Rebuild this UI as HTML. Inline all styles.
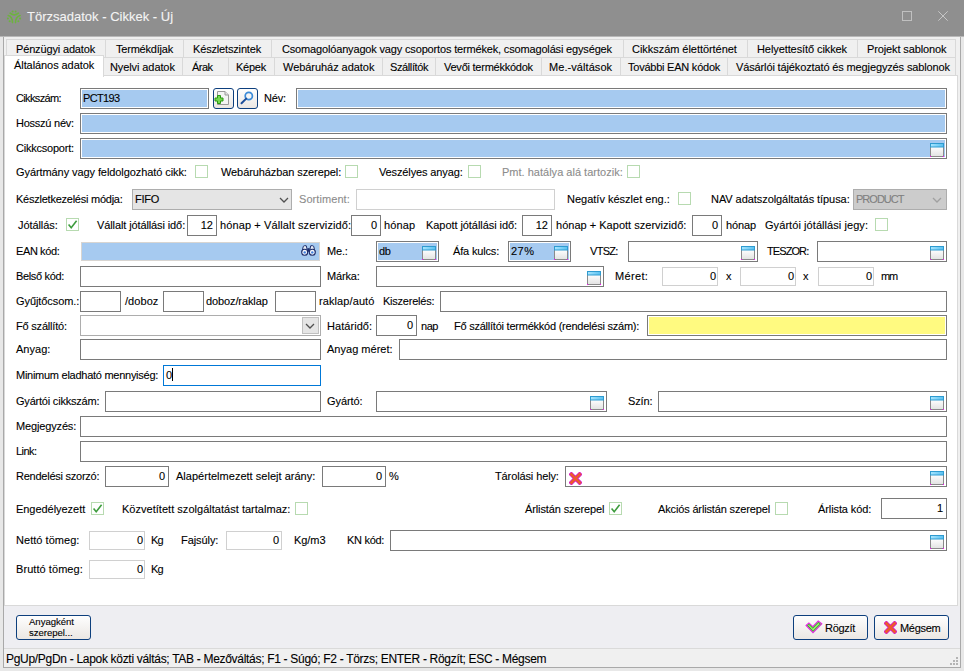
<!DOCTYPE html><html><head><meta charset="utf-8"><style>
html,body{margin:0;padding:0;width:964px;height:671px;overflow:hidden;background:#e8e8e8;position:relative}
body{font-family:"Liberation Sans",sans-serif}
.l{position:absolute;font-size:11px;line-height:13px;white-space:nowrap;color:#000;-webkit-text-stroke:0.1px currentColor}
.b{position:absolute}
.ic{position:absolute}
.cb{position:absolute;width:11px;height:11px;border:1px solid #b7dab0;background:#fff}
.tab{position:absolute;background:#f0f0f0;border:1px solid #d9d9d9;box-sizing:border-box}
.btn{position:absolute;box-sizing:border-box;border:1px solid #0d3f7d;border-radius:3px;background:linear-gradient(#fefefe,#ebe7e3)}
</style></head><body>
<div class="b" style="left:0px;top:0px;width:964px;height:36px;background:#8f8f8f"></div>
<div class="b" style="left:0px;top:36px;width:964px;height:1px;background:#b8b8b8"></div>
<div class="b" style="left:3px;top:37px;width:958px;height:631px;background:#f0f0f0"></div>
<div class="b" style="left:3px;top:37px;width:1px;height:631px;background:#a9a9a9"></div>
<div class="b" style="left:960px;top:37px;width:1px;height:631px;background:#a9a9a9"></div>
<div class="b" style="left:3px;top:667px;width:958px;height:1px;background:#a9a9a9"></div>
<svg class="ic" style="left:4px;top:6px" width="22" height="22" viewBox="0 0 22 22"><g fill="none" stroke="#6db33f" stroke-width="1.6" stroke-linecap="round"><path d="M6.1 7.2 Q10.2 10.6 14.4 7.2"/><path d="M4.3 9.5 Q8.5 10.8 8.5 16.6"/><path d="M16.1 9.5 Q11.5 10.8 11.5 16.6"/></g><g fill="#6db33f"><circle cx="8.6" cy="5.4" r="1"/><circle cx="11.6" cy="5.4" r="1"/><circle cx="3.9" cy="12.6" r="1"/><circle cx="5.6" cy="15.2" r="1"/><circle cx="16.1" cy="12.6" r="1"/><circle cx="14.4" cy="15.2" r="1"/></g></svg>
<div class="l" style="left:27px;top:9px;color:#f4f4f4;font-size:13px;line-height:16px;letter-spacing:0.007px;">Törzsadatok - Cikkek - Új</div>
<div class="b" style="left:902px;top:11px;width:10px;height:10px;border:1px solid #c0c0c0;box-sizing:border-box"></div>
<svg class="ic" style="left:938px;top:11px" width="10" height="10" viewBox="0 0 10 10"><path d="M0.3 0.3 L9.7 9.7 M9.7 0.3 L0.3 9.7" stroke="#c6c6c6" stroke-width="1"/></svg>
<div class="b" style="left:4px;top:75px;width:954px;height:531px;background:#fff;border:1px solid #d9d9d9;box-sizing:border-box"></div>
<div class="tab" style="left:6px;top:39px;width:100px;height:19px"></div>
<div class="tab" style="left:105px;top:39px;width:79px;height:19px"></div>
<div class="tab" style="left:183px;top:39px;width:89px;height:19px"></div>
<div class="tab" style="left:271px;top:39px;width:353px;height:19px"></div>
<div class="tab" style="left:623px;top:39px;width:125px;height:19px"></div>
<div class="tab" style="left:747px;top:39px;width:111px;height:19px"></div>
<div class="tab" style="left:857px;top:39px;width:99px;height:19px"></div>
<div class="l" style="left:16px;top:43px;letter-spacing:-0.153px;">Pénzügyi adatok</div>
<div class="l" style="left:116px;top:43px;letter-spacing:-0.210px;">Termékdíjak</div>
<div class="l" style="left:193px;top:43px;letter-spacing:-0.162px;">Készletszintek</div>
<div class="l" style="left:282px;top:43px;letter-spacing:-0.162px;">Csomagolóanyagok vagy csoportos termékek, csomagolási egységek</div>
<div class="l" style="left:632px;top:43px;letter-spacing:-0.043px;">Cikkszám élettörténet</div>
<div class="l" style="left:757px;top:43px;letter-spacing:-0.089px;">Helyettesítő cikkek</div>
<div class="l" style="left:867px;top:43px;letter-spacing:-0.115px;">Projekt sablonok</div>
<div class="tab" style="left:103px;top:57px;width:80px;height:19px"></div>
<div class="tab" style="left:182px;top:57px;width:47px;height:19px"></div>
<div class="tab" style="left:228px;top:57px;width:47px;height:19px"></div>
<div class="tab" style="left:274px;top:57px;width:109px;height:19px"></div>
<div class="tab" style="left:382px;top:57px;width:54px;height:19px"></div>
<div class="tab" style="left:435px;top:57px;width:107px;height:19px"></div>
<div class="tab" style="left:541px;top:57px;width:80px;height:19px"></div>
<div class="tab" style="left:620px;top:57px;width:108px;height:19px"></div>
<div class="tab" style="left:727px;top:57px;width:229px;height:19px"></div>
<div class="l" style="left:110px;top:61px;letter-spacing:-0.096px;">Nyelvi adatok</div>
<div class="l" style="left:192px;top:61px;letter-spacing:-0.542px;">Árak</div>
<div class="l" style="left:236px;top:61px;letter-spacing:-0.251px;">Képek</div>
<div class="l" style="left:283px;top:61px;letter-spacing:-0.049px;">Webáruház adatok</div>
<div class="l" style="left:390px;top:61px;letter-spacing:-0.385px;">Szállítók</div>
<div class="l" style="left:444px;top:61px;letter-spacing:-0.240px;">Vevői termékkódok</div>
<div class="l" style="left:549px;top:61px;letter-spacing:0.067px;">Me.-váltások</div>
<div class="l" style="left:628px;top:61px;letter-spacing:-0.231px;">További EAN kódok</div>
<div class="l" style="left:736px;top:61px;letter-spacing:-0.131px;">Vásárlói tájékoztató és megjegyzés sablonok</div>
<div class="b" style="left:4px;top:55px;width:100px;height:22px;background:#fff;border:1px solid #d9d9d9;border-bottom:none;box-sizing:border-box"></div>
<div class="l" style="left:14px;top:59px;letter-spacing:-0.076px;">Általános adatok</div>
<div class="l" style="left:16px;top:92px;letter-spacing:-0.642px;">Cikkszám:</div>
<div class="b" style="left:80px;top:88px;width:127px;height:19px;border:1px solid #7a7a7a;box-shadow:inset 0 0 0 1px #fff;background:#a6caf0;"></div>
<div class="l" style="left:83px;top:92px;letter-spacing:-0.652px;">PCT193</div>
<div class="btn" style="left:213px;top:88px;width:21px;height:21px"></div>
<svg class="ic" style="left:214px;top:89px" width="19" height="19" viewBox="0 0 19 19"><path d="M3.5 2.5 H11 L14.5 6 V15.5 H3.5 Z" fill="#f4f4f4" stroke="#9a9a9a"/><path d="M11 2.5 V6 H14.5" fill="#e4e4e4" stroke="#9a9a9a"/><path d="M3.5 6.5 H6.5 V9 H9 V12 H6.5 V14.5 H3.5 V12 H1 V9 H3.5 Z" fill="#74d850" stroke="#2a9812"/></svg>
<div class="btn" style="left:237px;top:88px;width:21px;height:21px"></div>
<svg class="ic" style="left:238px;top:89px" width="19" height="19" viewBox="0 0 19 19"><circle cx="10.8" cy="7" r="3.6" fill="#f4f4f4" stroke="#3a8ad8" stroke-width="1.7"/><path d="M8.2 9.6 L3.5 14.3" stroke="#1e4f9a" stroke-width="2" stroke-linecap="round"/></svg>
<div class="l" style="left:264px;top:92px;letter-spacing:-0.175px;">Név:</div>
<div class="b" style="left:296px;top:88px;width:649px;height:19px;border:1px solid #7a7a7a;box-shadow:inset 0 0 0 1px #fff;background:#a6caf0;"></div>
<div class="l" style="left:16px;top:117px;letter-spacing:-0.243px;">Hosszú név:</div>
<div class="b" style="left:80px;top:113px;width:865px;height:19px;border:1px solid #7a7a7a;box-shadow:inset 0 0 0 1px #fff;background:#a6caf0;"></div>
<div class="l" style="left:16px;top:142px;letter-spacing:-0.221px;">Cikkcsoport:</div>
<div class="b" style="left:80px;top:138px;width:865px;height:19px;border:1px solid #7a7a7a;box-shadow:inset 0 0 0 1px #fff;background:#a6caf0;"></div>
<svg class="ic" style="left:930px;top:143px" width="14" height="14" viewBox="0 0 14 14"><defs><linearGradient id="cg" x1="0" y1="0" x2="0" y2="1"><stop offset="0" stop-color="#ffffff"/><stop offset="1" stop-color="#e2e2e2"/></linearGradient><linearGradient id="ct" x1="0" y1="0" x2="1" y2="0"><stop offset="0" stop-color="#a8e6ff"/><stop offset="1" stop-color="#58c0f0"/></linearGradient></defs><rect x="0.5" y="3.5" width="13" height="10" fill="url(#cg)" stroke="#8a8a8a"/><rect x="0.5" y="0.5" width="13" height="3.5" fill="url(#ct)" stroke="#2f9bd0"/><rect x="0" y="13" width="1" height="1" fill="#ff00ff"/><rect x="13" y="13" width="1" height="1" fill="#ff00ff"/></svg>
<div class="l" style="left:16px;top:166px;letter-spacing:-0.083px;">Gyártmány vagy feldolgozható cikk:</div>
<div class="cb" style="left:195px;top:165px"></div>
<div class="l" style="left:221px;top:166px;letter-spacing:-0.091px;">Webáruházban szerepel:</div>
<div class="cb" style="left:345px;top:165px"></div>
<div class="l" style="left:379px;top:166px;letter-spacing:-0.128px;">Veszélyes anyag:</div>
<div class="cb" style="left:468px;top:165px"></div>
<div class="l" style="left:502px;top:166px;color:#8c8c8c;letter-spacing:0.010px;">Pmt. hatálya alá tartozik:</div>
<div class="cb" style="left:627px;top:165px"></div>
<div class="l" style="left:16px;top:193px;letter-spacing:-0.242px;">Készletkezelési módja:</div>
<div class="b" style="left:132px;top:189px;width:158px;height:19px;border:1px solid #adadad;background:#e5e5e5;"></div>
<div class="l" style="left:135px;top:193px;letter-spacing:-0.254px;">FIFO</div>
<svg class="ic" style="left:279px;top:197px" width="10" height="7" viewBox="0 0 10 7"><path d="M1 1 L5.0 5.0 L9 1" fill="none" stroke="#505050" stroke-width="1.25"/></svg>
<div class="l" style="left:299px;top:193px;color:#8c8c8c;letter-spacing:0.073px;">Sortiment:</div>
<div class="b" style="left:356px;top:189px;width:197px;height:19px;border:1px solid #d0d0d0;background:#fff;"></div>
<div class="l" style="left:567px;top:193px;letter-spacing:0.003px;">Negatív készlet eng.:</div>
<div class="cb" style="left:678px;top:192px"></div>
<div class="l" style="left:711px;top:193px;letter-spacing:-0.064px;">NAV adatszolgáltatás típusa:</div>
<div class="b" style="left:853px;top:189px;width:92px;height:19px;border:1px solid #adadad;background:#cccccc;"></div>
<div class="l" style="left:856px;top:193px;color:#808080;letter-spacing:-0.982px;">PRODUCT</div>
<svg class="ic" style="left:932px;top:197px" width="10" height="7" viewBox="0 0 10 7"><path d="M1 1 L5.0 5.0 L9 1" fill="none" stroke="#a0a0a0" stroke-width="1.25"/></svg>
<div class="l" style="left:18px;top:219px;letter-spacing:-0.082px;">Jótállás:</div>
<div class="cb" style="left:66px;top:218px"></div>
<svg class="ic" style="left:66px;top:218px" width="13" height="13" viewBox="0 0 13 13"><path d="M2.6 6.6 L5.2 9.8 L10.6 2.8" fill="none" stroke="#3d9c3d" stroke-width="1.6"/></svg>
<div class="l" style="left:97px;top:219px;letter-spacing:-0.110px;">Vállalt jótállási idő:</div>
<div class="b" style="left:187px;top:215px;width:28px;height:19px;border:1px solid #7a7a7a;box-shadow:inset 0 0 0 1px #fff;background:#fff;"></div>
<div class="l" style="left:187px;width:26px;text-align:right;top:219px;color:#000;letter-spacing:0">12</div>
<div class="l" style="left:220px;top:219px;letter-spacing:0.115px;">hónap + Vállalt szervizidő:</div>
<div class="b" style="left:351px;top:215px;width:28px;height:19px;border:1px solid #7a7a7a;box-shadow:inset 0 0 0 1px #fff;background:#fff;"></div>
<div class="l" style="left:351px;width:26px;text-align:right;top:219px;color:#000;letter-spacing:0">0</div>
<div class="l" style="left:384px;top:219px;letter-spacing:0.152px;">hónap</div>
<div class="l" style="left:426px;top:219px;letter-spacing:-0.062px;">Kapott jótállási idő:</div>
<div class="b" style="left:522px;top:215px;width:28px;height:19px;border:1px solid #7a7a7a;box-shadow:inset 0 0 0 1px #fff;background:#fff;"></div>
<div class="l" style="left:522px;width:26px;text-align:right;top:219px;color:#000;letter-spacing:0">12</div>
<div class="l" style="left:556px;top:219px;letter-spacing:0.018px;">hónap + Kapott szervizidő:</div>
<div class="b" style="left:692px;top:215px;width:28px;height:19px;border:1px solid #7a7a7a;box-shadow:inset 0 0 0 1px #fff;background:#fff;"></div>
<div class="l" style="left:692px;width:26px;text-align:right;top:219px;color:#000;letter-spacing:0">0</div>
<div class="l" style="left:726px;top:219px;letter-spacing:-0.123px;">hónap</div>
<div class="l" style="left:765px;top:219px;letter-spacing:0.068px;">Gyártói jótállási jegy:</div>
<div class="cb" style="left:875px;top:218px"></div>
<div class="l" style="left:16px;top:245px;letter-spacing:-0.396px;">EAN kód:</div>
<div class="b" style="left:81px;top:242px;width:237px;height:17px;border:1px solid #d8d5d1;background:#a6caf0;"></div>
<svg class="ic" style="left:301px;top:245px" width="15" height="11" viewBox="0 0 15 11"><path d="M0.9 7.2 L2.3 1.3 Q3.6 0.2 5.3 0.8 L6.6 6.8 Z" fill="#e9eef7" stroke="#1c2d6b" stroke-width="1"/><path d="M14.1 7.2 L12.7 1.3 Q11.4 0.2 9.7 0.8 L8.4 6.8 Z" fill="#e9eef7" stroke="#1c2d6b" stroke-width="1"/><circle cx="3.7" cy="7.3" r="3" fill="#f4f6fb" stroke="#1c2d6b" stroke-width="1.1"/><circle cx="11.3" cy="7.3" r="3" fill="#f4f6fb" stroke="#1c2d6b" stroke-width="1.1"/><rect x="6.4" y="3.2" width="2.2" height="3.6" fill="#1c2d6b"/><circle cx="3.7" cy="7.4" r="1.2" fill="#3d7fe0"/><circle cx="11.3" cy="7.4" r="1.2" fill="#3d7fe0"/></svg>
<div class="l" style="left:327px;top:245px;letter-spacing:-0.202px;">Me.:</div>
<div class="b" style="left:376px;top:241px;width:61px;height:19px;border:1px solid #7a7a7a;box-shadow:inset 0 0 0 1px #fff;background:#a6caf0;"></div>
<div class="l" style="left:379px;top:245px;letter-spacing:-0.250px;">db</div>
<svg class="ic" style="left:422px;top:246px" width="14" height="14" viewBox="0 0 14 14"><defs><linearGradient id="cg" x1="0" y1="0" x2="0" y2="1"><stop offset="0" stop-color="#ffffff"/><stop offset="1" stop-color="#e2e2e2"/></linearGradient><linearGradient id="ct" x1="0" y1="0" x2="1" y2="0"><stop offset="0" stop-color="#a8e6ff"/><stop offset="1" stop-color="#58c0f0"/></linearGradient></defs><rect x="0.5" y="3.5" width="13" height="10" fill="url(#cg)" stroke="#8a8a8a"/><rect x="0.5" y="0.5" width="13" height="3.5" fill="url(#ct)" stroke="#2f9bd0"/><rect x="0" y="13" width="1" height="1" fill="#ff00ff"/><rect x="13" y="13" width="1" height="1" fill="#ff00ff"/></svg>
<div class="l" style="left:453px;top:245px;letter-spacing:-0.165px;">Áfa kulcs:</div>
<div class="b" style="left:508px;top:241px;width:61px;height:19px;border:1px solid #7a7a7a;box-shadow:inset 0 0 0 1px #fff;background:#a6caf0;"></div>
<div class="l" style="left:511px;top:245px;letter-spacing:0.484px;">27%</div>
<svg class="ic" style="left:554px;top:246px" width="14" height="14" viewBox="0 0 14 14"><defs><linearGradient id="cg" x1="0" y1="0" x2="0" y2="1"><stop offset="0" stop-color="#ffffff"/><stop offset="1" stop-color="#e2e2e2"/></linearGradient><linearGradient id="ct" x1="0" y1="0" x2="1" y2="0"><stop offset="0" stop-color="#a8e6ff"/><stop offset="1" stop-color="#58c0f0"/></linearGradient></defs><rect x="0.5" y="3.5" width="13" height="10" fill="url(#cg)" stroke="#8a8a8a"/><rect x="0.5" y="0.5" width="13" height="3.5" fill="url(#ct)" stroke="#2f9bd0"/><rect x="0" y="13" width="1" height="1" fill="#ff00ff"/><rect x="13" y="13" width="1" height="1" fill="#ff00ff"/></svg>
<div class="l" style="left:590px;top:245px;letter-spacing:-0.693px;">VTSZ:</div>
<div class="b" style="left:628px;top:241px;width:128px;height:19px;border:1px solid #7a7a7a;box-shadow:inset 0 0 0 1px #fff;background:#fff;"></div>
<svg class="ic" style="left:741px;top:246px" width="14" height="14" viewBox="0 0 14 14"><defs><linearGradient id="cg" x1="0" y1="0" x2="0" y2="1"><stop offset="0" stop-color="#ffffff"/><stop offset="1" stop-color="#e2e2e2"/></linearGradient><linearGradient id="ct" x1="0" y1="0" x2="1" y2="0"><stop offset="0" stop-color="#a8e6ff"/><stop offset="1" stop-color="#58c0f0"/></linearGradient></defs><rect x="0.5" y="3.5" width="13" height="10" fill="url(#cg)" stroke="#8a8a8a"/><rect x="0.5" y="0.5" width="13" height="3.5" fill="url(#ct)" stroke="#2f9bd0"/><rect x="0" y="13" width="1" height="1" fill="#ff00ff"/><rect x="13" y="13" width="1" height="1" fill="#ff00ff"/></svg>
<div class="l" style="left:767px;top:245px;letter-spacing:-0.912px;">TESZOR:</div>
<div class="b" style="left:817px;top:241px;width:128px;height:19px;border:1px solid #7a7a7a;box-shadow:inset 0 0 0 1px #fff;background:#fff;"></div>
<svg class="ic" style="left:930px;top:246px" width="14" height="14" viewBox="0 0 14 14"><defs><linearGradient id="cg" x1="0" y1="0" x2="0" y2="1"><stop offset="0" stop-color="#ffffff"/><stop offset="1" stop-color="#e2e2e2"/></linearGradient><linearGradient id="ct" x1="0" y1="0" x2="1" y2="0"><stop offset="0" stop-color="#a8e6ff"/><stop offset="1" stop-color="#58c0f0"/></linearGradient></defs><rect x="0.5" y="3.5" width="13" height="10" fill="url(#cg)" stroke="#8a8a8a"/><rect x="0.5" y="0.5" width="13" height="3.5" fill="url(#ct)" stroke="#2f9bd0"/><rect x="0" y="13" width="1" height="1" fill="#ff00ff"/><rect x="13" y="13" width="1" height="1" fill="#ff00ff"/></svg>
<div class="l" style="left:16px;top:270px;letter-spacing:-0.342px;">Belső kód:</div>
<div class="b" style="left:80px;top:266px;width:239px;height:19px;border:1px solid #7a7a7a;box-shadow:inset 0 0 0 1px #fff;background:#fff;"></div>
<div class="l" style="left:327px;top:270px;letter-spacing:-0.165px;">Márka:</div>
<div class="b" style="left:376px;top:266px;width:226px;height:19px;border:1px solid #7a7a7a;box-shadow:inset 0 0 0 1px #fff;background:#fff;"></div>
<svg class="ic" style="left:587px;top:271px" width="14" height="14" viewBox="0 0 14 14"><defs><linearGradient id="cg" x1="0" y1="0" x2="0" y2="1"><stop offset="0" stop-color="#ffffff"/><stop offset="1" stop-color="#e2e2e2"/></linearGradient><linearGradient id="ct" x1="0" y1="0" x2="1" y2="0"><stop offset="0" stop-color="#a8e6ff"/><stop offset="1" stop-color="#58c0f0"/></linearGradient></defs><rect x="0.5" y="3.5" width="13" height="10" fill="url(#cg)" stroke="#8a8a8a"/><rect x="0.5" y="0.5" width="13" height="3.5" fill="url(#ct)" stroke="#2f9bd0"/><rect x="0" y="13" width="1" height="1" fill="#ff00ff"/><rect x="13" y="13" width="1" height="1" fill="#ff00ff"/></svg>
<div class="l" style="left:615px;top:270px;letter-spacing:0.342px;">Méret:</div>
<div class="b" style="left:662px;top:267px;width:54px;height:17px;border:1px solid #d0d0d0;background:#fff;"></div>
<div class="l" style="left:662px;width:54px;text-align:right;top:270px;color:#000;letter-spacing:0">0</div>
<div class="l" style="left:726px;top:270px;letter-spacing:0.400px;">x</div>
<div class="b" style="left:740px;top:267px;width:54px;height:17px;border:1px solid #d0d0d0;background:#fff;"></div>
<div class="l" style="left:740px;width:54px;text-align:right;top:270px;color:#000;letter-spacing:0">0</div>
<div class="l" style="left:803px;top:270px;letter-spacing:1.000px;">x</div>
<div class="b" style="left:818px;top:267px;width:54px;height:17px;border:1px solid #d0d0d0;background:#fff;"></div>
<div class="l" style="left:818px;width:54px;text-align:right;top:270px;color:#000;letter-spacing:0">0</div>
<div class="l" style="left:881px;top:270px;letter-spacing:-1.200px;">mm</div>
<div class="l" style="left:16px;top:295px;letter-spacing:-0.081px;">Gyűjtőcsom.:</div>
<div class="b" style="left:80px;top:291px;width:39px;height:19px;border:1px solid #7a7a7a;box-shadow:inset 0 0 0 1px #fff;background:#fff;"></div>
<div class="l" style="left:125px;top:295px;letter-spacing:0.054px;">/doboz</div>
<div class="b" style="left:163px;top:291px;width:39px;height:19px;border:1px solid #7a7a7a;box-shadow:inset 0 0 0 1px #fff;background:#fff;"></div>
<div class="l" style="left:206px;top:295px;letter-spacing:-0.109px;">doboz/raklap</div>
<div class="b" style="left:275px;top:291px;width:39px;height:19px;border:1px solid #7a7a7a;box-shadow:inset 0 0 0 1px #fff;background:#fff;"></div>
<div class="l" style="left:319px;top:295px;letter-spacing:0.096px;">raklap/autó</div>
<div class="l" style="left:383px;top:295px;letter-spacing:-0.230px;">Kiszerelés:</div>
<div class="b" style="left:440px;top:291px;width:505px;height:19px;border:1px solid #7a7a7a;box-shadow:inset 0 0 0 1px #fff;background:#fff;"></div>
<div class="l" style="left:16px;top:320px;letter-spacing:-0.199px;">Fő szállító:</div>
<div class="b" style="left:80px;top:315px;width:239px;height:19px;border:1px solid #adadad;background:#fff;"></div>
<div class="b" style="left:302px;top:317px;width:15px;height:15px;background:#e5e5e5;border:1px solid #c0c0c0"></div>
<svg class="ic" style="left:305px;top:323px" width="10" height="7" viewBox="0 0 10 7"><path d="M1 1 L5.0 5.0 L9 1" fill="none" stroke="#505050" stroke-width="1.25"/></svg>
<div class="l" style="left:327px;top:320px;letter-spacing:0.057px;">Határidő:</div>
<div class="b" style="left:376px;top:315px;width:39px;height:19px;border:1px solid #7a7a7a;box-shadow:inset 0 0 0 1px #fff;background:#fff;"></div>
<div class="l" style="left:376px;width:37px;text-align:right;top:319px;color:#000;letter-spacing:0">0</div>
<div class="l" style="left:421px;top:320px;letter-spacing:-0.480px;">nap</div>
<div class="l" style="left:454px;top:320px;letter-spacing:-0.233px;">Fő szállítói termékkód (rendelési szám):</div>
<div class="b" style="left:647px;top:315px;width:298px;height:19px;border:1px solid #7a7a7a;box-shadow:inset 0 0 0 1px #fff;background:#fffa80;"></div>
<div class="l" style="left:16px;top:343px;letter-spacing:0.030px;">Anyag:</div>
<div class="b" style="left:80px;top:339px;width:239px;height:19px;border:1px solid #7a7a7a;box-shadow:inset 0 0 0 1px #fff;background:#fff;"></div>
<div class="l" style="left:327px;top:343px;letter-spacing:0.016px;">Anyag méret:</div>
<div class="b" style="left:399px;top:339px;width:546px;height:19px;border:1px solid #7a7a7a;box-shadow:inset 0 0 0 1px #fff;background:#fff;"></div>
<div class="l" style="left:16px;top:369px;letter-spacing:-0.265px;">Minimum eladható mennyiség:</div>
<div class="b" style="left:163px;top:365px;width:156px;height:19px;border:1px solid #0078d7;background:#fff;"></div>
<div class="l" style="left:166px;top:369px;letter-spacing:-0.525px;">0</div>
<div class="b" style="left:172px;top:368px;width:1px;height:13px;background:#000"></div>
<div class="l" style="left:16px;top:395px;letter-spacing:-0.206px;">Gyártói cikkszám:</div>
<div class="b" style="left:105px;top:391px;width:214px;height:19px;border:1px solid #7a7a7a;box-shadow:inset 0 0 0 1px #fff;background:#fff;"></div>
<div class="l" style="left:327px;top:395px;letter-spacing:-0.080px;">Gyártó:</div>
<div class="b" style="left:376px;top:391px;width:229px;height:19px;border:1px solid #7a7a7a;box-shadow:inset 0 0 0 1px #fff;background:#fff;"></div>
<svg class="ic" style="left:590px;top:396px" width="14" height="14" viewBox="0 0 14 14"><defs><linearGradient id="cg" x1="0" y1="0" x2="0" y2="1"><stop offset="0" stop-color="#ffffff"/><stop offset="1" stop-color="#e2e2e2"/></linearGradient><linearGradient id="ct" x1="0" y1="0" x2="1" y2="0"><stop offset="0" stop-color="#a8e6ff"/><stop offset="1" stop-color="#58c0f0"/></linearGradient></defs><rect x="0.5" y="3.5" width="13" height="10" fill="url(#cg)" stroke="#8a8a8a"/><rect x="0.5" y="0.5" width="13" height="3.5" fill="url(#ct)" stroke="#2f9bd0"/><rect x="0" y="13" width="1" height="1" fill="#ff00ff"/><rect x="13" y="13" width="1" height="1" fill="#ff00ff"/></svg>
<div class="l" style="left:628px;top:395px;letter-spacing:-0.120px;">Szín:</div>
<div class="b" style="left:658px;top:391px;width:287px;height:19px;border:1px solid #7a7a7a;box-shadow:inset 0 0 0 1px #fff;background:#fff;"></div>
<svg class="ic" style="left:930px;top:396px" width="14" height="14" viewBox="0 0 14 14"><defs><linearGradient id="cg" x1="0" y1="0" x2="0" y2="1"><stop offset="0" stop-color="#ffffff"/><stop offset="1" stop-color="#e2e2e2"/></linearGradient><linearGradient id="ct" x1="0" y1="0" x2="1" y2="0"><stop offset="0" stop-color="#a8e6ff"/><stop offset="1" stop-color="#58c0f0"/></linearGradient></defs><rect x="0.5" y="3.5" width="13" height="10" fill="url(#cg)" stroke="#8a8a8a"/><rect x="0.5" y="0.5" width="13" height="3.5" fill="url(#ct)" stroke="#2f9bd0"/><rect x="0" y="13" width="1" height="1" fill="#ff00ff"/><rect x="13" y="13" width="1" height="1" fill="#ff00ff"/></svg>
<div class="l" style="left:16px;top:420px;letter-spacing:-0.147px;">Megjegyzés:</div>
<div class="b" style="left:80px;top:416px;width:865px;height:19px;border:1px solid #7a7a7a;box-shadow:inset 0 0 0 1px #fff;background:#fff;"></div>
<div class="l" style="left:16px;top:445px;letter-spacing:-0.537px;">Link:</div>
<div class="b" style="left:80px;top:441px;width:865px;height:19px;border:1px solid #7a7a7a;box-shadow:inset 0 0 0 1px #fff;background:#fff;"></div>
<div class="l" style="left:16px;top:470px;letter-spacing:-0.246px;">Rendelési szorzó:</div>
<div class="b" style="left:105px;top:466px;width:62px;height:19px;border:1px solid #7a7a7a;box-shadow:inset 0 0 0 1px #fff;background:#fff;"></div>
<div class="l" style="left:105px;width:60px;text-align:right;top:470px;color:#000;letter-spacing:0">0</div>
<div class="l" style="left:176px;top:470px;letter-spacing:0.018px;">Alapértelmezett selejt arány:</div>
<div class="b" style="left:322px;top:466px;width:62px;height:19px;border:1px solid #7a7a7a;box-shadow:inset 0 0 0 1px #fff;background:#fff;"></div>
<div class="l" style="left:322px;width:60px;text-align:right;top:470px;color:#000;letter-spacing:0">0</div>
<div class="l" style="left:389px;top:470px;letter-spacing:0.819px;">%</div>
<div class="l" style="left:495px;top:470px;letter-spacing:-0.117px;">Tárolási hely:</div>
<div class="b" style="left:565px;top:466px;width:380px;height:19px;border:1px solid #7a7a7a;box-shadow:inset 0 0 0 1px #fff;background:#fff;"></div>
<svg class="ic" style="left:569px;top:472px" width="13" height="13" viewBox="0 0 14 14"><path d="M2.6 2.6 L11.4 11.4 M11.4 2.6 L2.6 11.4" stroke="#d81ec8" stroke-width="4.6" stroke-linecap="square"/><path d="M2.6 2.6 L11.4 11.4 M11.4 2.6 L2.6 11.4" stroke="#ec5a2a" stroke-width="2.8" stroke-linecap="square"/></svg>
<svg class="ic" style="left:930px;top:471px" width="14" height="14" viewBox="0 0 14 14"><defs><linearGradient id="cg" x1="0" y1="0" x2="0" y2="1"><stop offset="0" stop-color="#ffffff"/><stop offset="1" stop-color="#e2e2e2"/></linearGradient><linearGradient id="ct" x1="0" y1="0" x2="1" y2="0"><stop offset="0" stop-color="#a8e6ff"/><stop offset="1" stop-color="#58c0f0"/></linearGradient></defs><rect x="0.5" y="3.5" width="13" height="10" fill="url(#cg)" stroke="#8a8a8a"/><rect x="0.5" y="0.5" width="13" height="3.5" fill="url(#ct)" stroke="#2f9bd0"/><rect x="0" y="13" width="1" height="1" fill="#ff00ff"/><rect x="13" y="13" width="1" height="1" fill="#ff00ff"/></svg>
<div class="l" style="left:16px;top:503px;letter-spacing:-0.043px;">Engedélyezett</div>
<div class="cb" style="left:91px;top:502px"></div>
<svg class="ic" style="left:91px;top:502px" width="13" height="13" viewBox="0 0 13 13"><path d="M2.6 6.6 L5.2 9.8 L10.6 2.8" fill="none" stroke="#3d9c3d" stroke-width="1.6"/></svg>
<div class="l" style="left:122px;top:503px;letter-spacing:0.025px;">Közvetített szolgáltatást tartalmaz:</div>
<div class="cb" style="left:295px;top:502px"></div>
<div class="l" style="left:525px;top:503px;letter-spacing:-0.121px;">Árlistán szerepel</div>
<div class="cb" style="left:609px;top:502px"></div>
<svg class="ic" style="left:609px;top:502px" width="13" height="13" viewBox="0 0 13 13"><path d="M2.6 6.6 L5.2 9.8 L10.6 2.8" fill="none" stroke="#3d9c3d" stroke-width="1.6"/></svg>
<div class="l" style="left:658px;top:503px;letter-spacing:-0.151px;">Akciós árlistán szerepel</div>
<div class="cb" style="left:775px;top:502px"></div>
<div class="l" style="left:818px;top:503px;letter-spacing:-0.102px;">Árlista kód:</div>
<div class="b" style="left:881px;top:498px;width:64px;height:19px;border:1px solid #7a7a7a;box-shadow:inset 0 0 0 1px #fff;background:#fff;"></div>
<div class="l" style="left:881px;width:62px;text-align:right;top:502px;color:#000;letter-spacing:0">1</div>
<div class="l" style="left:16px;top:534px;letter-spacing:0.038px;">Nettó tömeg:</div>
<div class="b" style="left:89px;top:531px;width:54px;height:17px;border:1px solid #d0d0d0;background:#fff;"></div>
<div class="l" style="left:89px;width:54px;text-align:right;top:534px;color:#000;letter-spacing:0">0</div>
<div class="l" style="left:151px;top:534px;letter-spacing:-0.769px;">Kg</div>
<div class="l" style="left:181px;top:534px;letter-spacing:-0.072px;">Fajsúly:</div>
<div class="b" style="left:226px;top:531px;width:54px;height:17px;border:1px solid #d0d0d0;background:#fff;"></div>
<div class="l" style="left:226px;width:53px;text-align:right;top:534px;color:#000;letter-spacing:0">0</div>
<div class="l" style="left:294px;top:534px;letter-spacing:-0.074px;">Kg/m3</div>
<div class="l" style="left:347px;top:534px;letter-spacing:-0.290px;">KN kód:</div>
<div class="b" style="left:390px;top:530px;width:555px;height:19px;border:1px solid #7a7a7a;box-shadow:inset 0 0 0 1px #fff;background:#fff;"></div>
<svg class="ic" style="left:930px;top:535px" width="14" height="14" viewBox="0 0 14 14"><defs><linearGradient id="cg" x1="0" y1="0" x2="0" y2="1"><stop offset="0" stop-color="#ffffff"/><stop offset="1" stop-color="#e2e2e2"/></linearGradient><linearGradient id="ct" x1="0" y1="0" x2="1" y2="0"><stop offset="0" stop-color="#a8e6ff"/><stop offset="1" stop-color="#58c0f0"/></linearGradient></defs><rect x="0.5" y="3.5" width="13" height="10" fill="url(#cg)" stroke="#8a8a8a"/><rect x="0.5" y="0.5" width="13" height="3.5" fill="url(#ct)" stroke="#2f9bd0"/><rect x="0" y="13" width="1" height="1" fill="#ff00ff"/><rect x="13" y="13" width="1" height="1" fill="#ff00ff"/></svg>
<div class="l" style="left:16px;top:563px;letter-spacing:0.063px;">Bruttó tömeg:</div>
<div class="b" style="left:89px;top:560px;width:54px;height:17px;border:1px solid #d0d0d0;background:#fff;"></div>
<div class="l" style="left:89px;width:54px;text-align:right;top:563px;color:#000;letter-spacing:0">0</div>
<div class="l" style="left:151px;top:563px;letter-spacing:-0.769px;">Kg</div>
<div class="b" style="left:4px;top:606px;width:956px;height:42px;background:#eeeef2"></div>
<div class="b" style="left:4px;top:648px;width:956px;height:1px;background:#dadada"></div>
<div class="btn" style="left:16px;top:615px;width:75px;height:25px"></div>
<div class="l" style="left:29px;top:616px;font-size:9.6px;line-height:11px;letter-spacing:-0.05px">Anyagként<br>szerepel...</div>
<div class="btn" style="left:793px;top:615px;width:75px;height:25px"></div>
<svg class="ic" style="left:802px;top:616px" width="24" height="22" viewBox="0 0 24 22"><polygon points="4.1,9.5 6.9,6.9 10.8,10.7 16.2,5.1 19.8,7.9 11,16.6" fill="#94e870" stroke="#e81ee8" stroke-width="1.1" stroke-linejoin="miter"/><polygon points="5.6,9.5 6.9,8.3 10.8,12.1 16.2,6.5 18.3,7.9 11,15.2" fill="none" stroke="#28a018" stroke-width="0.8"/></svg>
<div class="l" style="left:825px;top:622px;letter-spacing:-0.279px;">Rögzít</div>
<div class="btn" style="left:874px;top:615px;width:75px;height:25px"></div>
<svg class="ic" style="left:884px;top:621px" width="13" height="13" viewBox="0 0 14 14"><path d="M2.6 2.6 L11.4 11.4 M11.4 2.6 L2.6 11.4" stroke="#d81ec8" stroke-width="4.6" stroke-linecap="square"/><path d="M2.6 2.6 L11.4 11.4 M11.4 2.6 L2.6 11.4" stroke="#ec5a2a" stroke-width="2.8" stroke-linecap="square"/></svg>
<div class="l" style="left:900px;top:622px;letter-spacing:-0.317px;">Mégsem</div>
<div class="l" style="left:6px;top:652px;font-size:12px;line-height:15px;letter-spacing:-0.303px;">PgUp/PgDn - Lapok közti váltás; TAB - Mezőváltás; F1 - Súgó; F2 - Törzs; ENTER - Rögzít; ESC - Mégsem</div>
<div class="b" style="left:956px;top:657px;width:2px;height:2px;background:#b4b4b4"></div>
<div class="b" style="left:953px;top:660px;width:2px;height:2px;background:#b4b4b4"></div>
<div class="b" style="left:956px;top:660px;width:2px;height:2px;background:#b4b4b4"></div>
<div class="b" style="left:950px;top:663px;width:2px;height:2px;background:#b4b4b4"></div>
<div class="b" style="left:953px;top:663px;width:2px;height:2px;background:#b4b4b4"></div>
<div class="b" style="left:956px;top:663px;width:2px;height:2px;background:#b4b4b4"></div>
</body></html>
